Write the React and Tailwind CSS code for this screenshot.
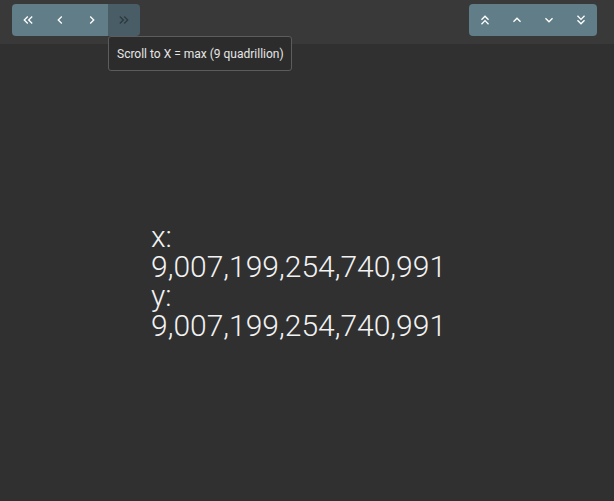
import React from "react";

const P = {
  dl: "M17.59,18L19,16.59L14.42,12L19,7.41L17.59,6l-6,6L17.59,18z M11,18l1.41-1.41L7.83,12l4.58-4.59L11,6l-6,6L11,18z",
  l: "M15.41 16.59L10.83 12l4.58-4.59L14 6l-6 6 6 6 1.41-1.41z",
  r: "M8.59 16.59L13.17 12 8.59 7.41 10 6l6 6-6 6-1.41-1.41z",
  dr: "M6.41 6L5 7.41 9.58 12 5 16.59 6.41 18l6-6z M13 6l-1.41 1.41L16.17 12l-4.58 4.59L13 18l6-6z",
  du: "M6 17.59L7.41 19 12 14.42 16.59 19 18 17.59l-6-6z M6 11l1.41 1.41L12 7.83l4.59 4.58L18 11l-6-6z",
  u: "M7.41 15.41L12 10.83l4.59 4.58L18 14l-6-6-6 6z",
  d: "M7.41 8.59L12 13.17l4.59-4.58L18 10l-6 6-6-6 1.41-1.41z",
  dd: "M18 6.41L16.59 5 12 9.58 7.41 5 6 6.41l6 6z M18 13l-1.41-1.41L12 16.17l-4.59-4.58L6 13l6 6z",
};

function Btn({ p, disabled }) {
  return (
    <div
      className={
        "w-8 h-8 flex items-center justify-center " +
        (disabled ? "bg-[#495d67] text-[#2f3a40]" : "bg-[#607d88] text-white")
      }
    >
      <svg width="16" height="16" viewBox="0 0 24 24" fill="currentColor">
        <path d={p} />
      </svg>
    </div>
  );
}

export default function App() {
  return (
    <div
      className="w-[614px] h-[501px] bg-[#303030] flex flex-col overflow-hidden"
      style={{ fontFamily: "Roboto, 'Liberation Sans', sans-serif" }}
    >
      <div className="h-11 bg-[#393939] flex items-start justify-between pt-1 pl-3 pr-[17px] relative">
        <div className="flex rounded-sm overflow-hidden">
          <Btn p={P.dl} />
          <Btn p={P.l} />
          <Btn p={P.r} />
          <Btn p={P.dr} disabled />
        </div>
        <div className="flex rounded-sm overflow-hidden">
          <Btn p={P.du} />
          <Btn p={P.u} />
          <Btn p={P.d} />
          <Btn p={P.dd} />
        </div>
        <div className="absolute left-[108px] top-9 w-[184px] h-[35px] bg-[#2c2c2c] border border-[#5c5c5c] rounded-[3px] flex items-center pl-2 text-[12px] text-[#e6e6e6] z-10">
          Scroll to X = max (9 quadrillion)
        </div>
      </div>
      <div className="pl-[151px] pt-[178px] text-[30px] leading-[29.5px] font-light text-[#f2f2f2]">
        <div>x:</div>
        <div>9,007,199,254,740,991</div>
        <div>y:</div>
        <div>9,007,199,254,740,991</div>
      </div>
    </div>
  );
}
